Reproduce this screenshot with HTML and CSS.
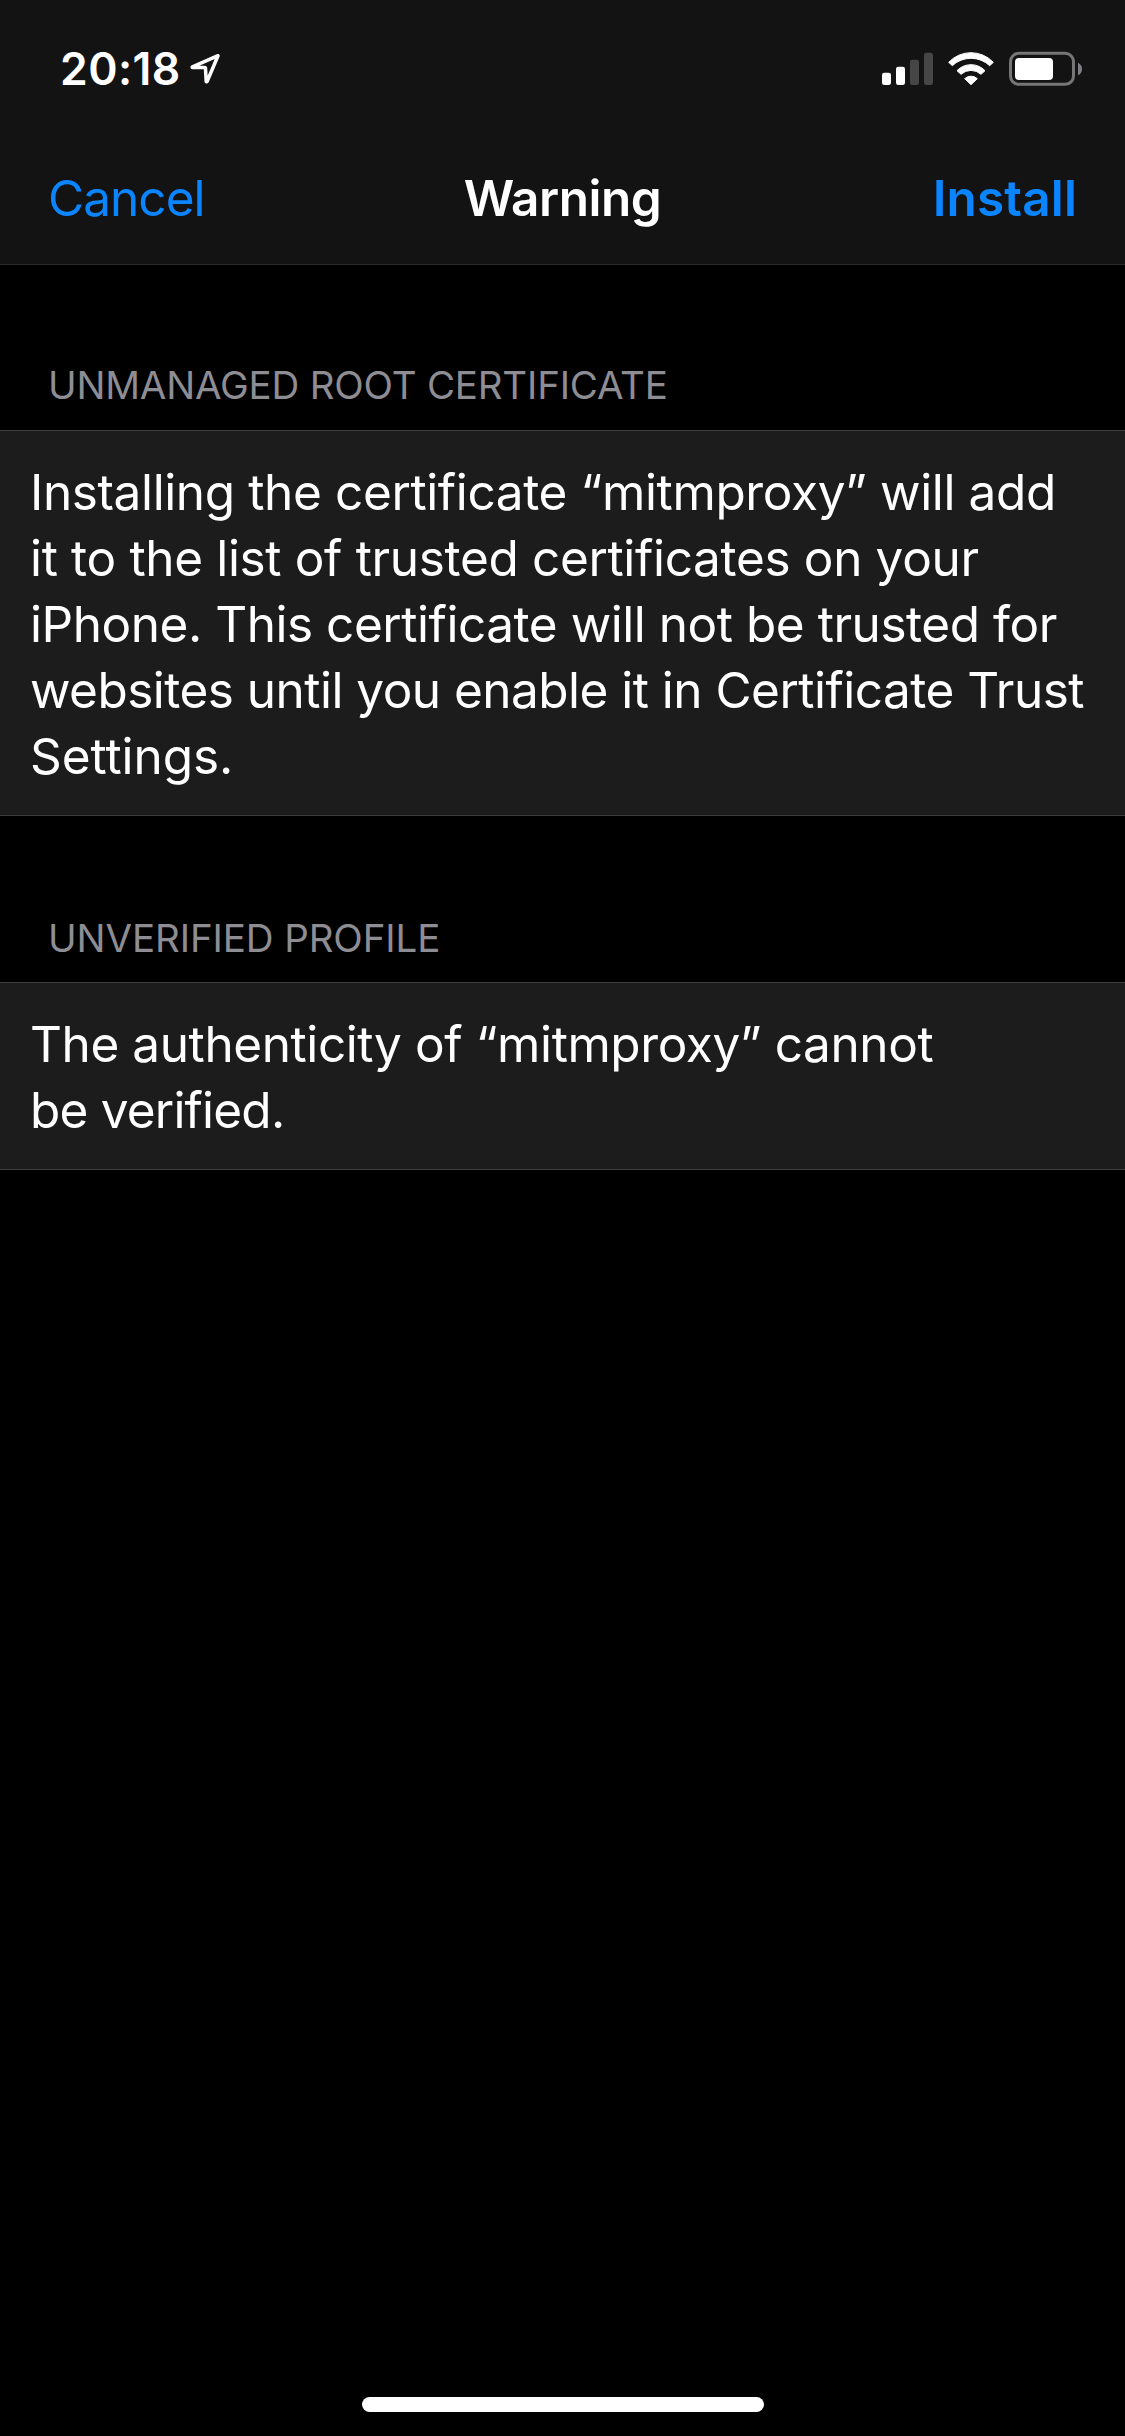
FILE: index.html
```html
<!DOCTYPE html>
<html lang="en">
<head>
<meta charset="utf-8">
<title>Warning</title>
<link rel="stylesheet" href="styles.css">
</head>
<body>
<div class="screen">
  <header class="top">
    <div class="status">
      <div class="clock">
        <span class="time">20:18</span>
        <svg class="location" viewBox="0 0 32 34" width="32" height="34"><path d="M29 4.700 3.400 15.800q-.6.500.2.700H15.500q1 0 1 1L17.200 30.400q.4.800.9.100Z"/></svg>
      </div>
      <div class="indicators">
        <svg viewBox="51 63 153 108" width="51" height="36">
          <g fill="#fff"><rect x="51" y="128" width="27" height="37" rx="7"/><rect x="93" y="110" width="27" height="55" rx="7"/></g>
          <g fill="#464646"><rect x="135" y="89" width="27" height="76" rx="7"/><rect x="177" y="68" width="27" height="97" rx="7"/></g>
        </svg>
        <svg viewBox="249 63 138 108" width="46" height="36" fill="#fff" stroke="#fff" stroke-width="3" stroke-linejoin="round">
          <path d="M251 97A92 92 0 0 1 385 97L374 107A82 82 0 0 0 262 107Z"/>
          <path d="M276 122A58 58 0 0 1 360 122L348 133A44 44 0 0 0 288 133Z"/>
          <path d="M299 146A28 28 0 0 1 337 146L318 164Z"/>
        </svg>
        <svg viewBox="432 63 219 108" width="73" height="36">
          <rect x="436.500" y="70" width="189" height="93" rx="25" fill="none" stroke="#767676" stroke-width="9"/>
          <rect x="450" y="84" width="114" height="66" rx="12" fill="#fff"/>
          <path d="M639 98Q651 104 651 117T639 136Z" fill="#808084"/>
        </svg>
      </div>
    </div>
    <nav class="bar">
      <a class="action cancel">Cancel</a>
      <h1 class="title">Warning</h1>
      <a class="action install">Install</a>
    </nav>
  </header>
  <main class="content">
    <section>
      <h2 class="heading">UNMANAGED ROOT CERTIFICATE</h2>
      <p class="cell">
        <span class="line t1">Installing the certificate “mitmproxy” will add</span>
        <span class="line t5">it to the list of trusted certificates on your</span>
        <span class="line t2">iPhone. This certificate will not be trusted for</span>
        <span class="line t3">websites until you enable it in Certificate Trust</span>
        <span class="line t0">Settings.</span>
      </p>
    </section>
    <section>
      <h2 class="heading second">UNVERIFIED PROFILE</h2>
      <p class="cell">
        <span class="line t6">The authenticity of “mitmproxy” cannot</span>
        <span class="line t4">be verified.</span>
      </p>
    </section>
  </main>
  <div class="home"></div>
</div>
</body>
</html>
```
FILE: styles.css
```css
* { box-sizing: border-box; }
body { margin: 0; background: #000; }
svg { display: block; }

.screen {
  display: flex;
  flex-direction: column;
  width: 1125px;
  height: 2436px;
  background: #000;
  color: #fff;
  font-family: Inter, "Liberation Sans", sans-serif;
}

.top { background: #131313; border-bottom: 1px solid #2a2a2a; }
.status {
  display: flex;
  justify-content: space-between;
  height: 132px;
  padding: 42px 43px 0 60px;
}
.clock { display: flex; gap: 8px; }
.time { font-size: 44.5px; line-height: 54px; font-weight: 600; letter-spacing: .4px; }
.location {
  margin-top: 9px;
  fill: none;
  stroke: #fff;
  stroke-width: 3.5;
  stroke-linejoin: round;
}
.indicators { display: flex; gap: 15px; padding-top: 9px; }

.bar {
  display: grid;
  grid-template-columns: 1fr auto 1fr;
  height: 132px;
  padding: 36px 48px;
  font-size: 49.5px;
  line-height: 60px;
}
.title { margin: 0; font-size: inherit; font-weight: 600; letter-spacing: -.5px; }
.action { color: #0a84ff; }
.cancel { letter-spacing: -.95px; }
.install { justify-self: end; font-weight: 600; letter-spacing: .15px; }

.content { flex: 1; }
.heading {
  margin: 0;
  padding: 97px 48px 22px;
  color: #8d8d93;
  font-size: 38.5px;
  font-weight: 400;
  line-height: 46px;
  letter-spacing: -.2px;
}
.second { padding-top: 99px; padding-bottom: 21px; letter-spacing: -.1px; }
.cell {
  margin: 0;
  padding: 28px 0 26px 30px;
  border: solid #3d3d41;
  border-width: 1px 0;
  background: #1c1c1c;
  font-size: 49.5px;
  line-height: 66px;
  white-space: nowrap;
}
.line { display: block; }
.t0 { letter-spacing: -.05px; }
.t1 { letter-spacing: -.375px; }
.t2 { letter-spacing: -.46px; }
.t3 { letter-spacing: -.52px; }
.t4 { letter-spacing: -.8px; }
.t5 { letter-spacing: -.34px; }
.t6 { letter-spacing: -.41px; }

.home {
  align-self: center;
  width: 402px;
  height: 15px;
  margin-bottom: 24px;
  border-radius: 8px;
  background: #fff;
}
```
